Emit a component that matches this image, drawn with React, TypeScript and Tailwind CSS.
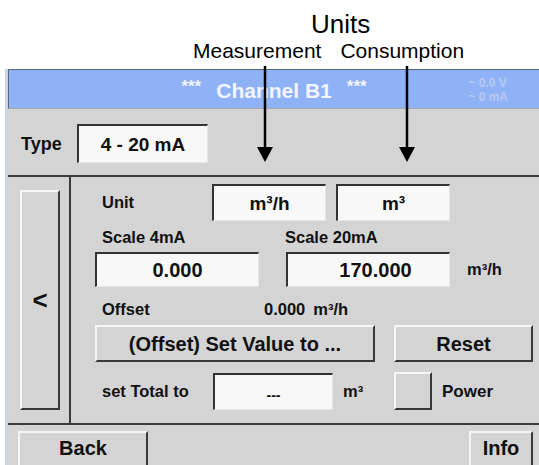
import React from "react";

const inputCls =
  "bg-[#f8f8f8] border-t-2 border-l-2 border-t-[#333] border-l-[#333] border-r border-b border-r-[#e6e6e6] border-b-[#e6e6e6] flex items-center justify-center font-bold text-[#111]";
const btnCls =
  "bg-[#d4d4d4] border-t-2 border-l-2 border-t-[#f6f6f6] border-l-[#f6f6f6] border-r-2 border-b-2 border-r-[#383838] border-b-[#383838] flex items-center justify-center font-bold text-[#111]";
const labelCls = "font-bold text-[16.5px] text-[#111]";

export default function App() {
  return (
    <div className="relative w-[539px] h-[465px] overflow-hidden bg-white font-['Liberation_Sans',Arial,sans-serif] leading-none">
      {/* Top annotation */}
      <div className="h-[69px] flex flex-col">
        <div className="pt-[11px] pl-[311px] text-[26px] text-black h-[36px]">Units</div>
        <div className="flex mt-[4px] text-[21px] text-black">
          <span className="pl-[193px]">Measurement</span>
          <span className="ml-[19px]">Consumption</span>
        </div>
      </div>

      {/* Panel */}
      <div className="ml-[5px] border-l-[3px] border-l-[#c8d5ec] flex flex-col">
        {/* Header */}
        <div className="h-[40px] bg-[#8fb1f6] border-t border-l border-t-[#5d6677] border-l-[#5d6677] border-b border-b-[#a6a6a6] grid grid-cols-[1fr_auto_1fr] items-center">
          <div />
          <div className="flex items-center gap-[15px] text-[#f2f5fd] font-bold pt-[2px]">
            <span className="text-[17px] -mt-[8px]">***</span>
            <span className="text-[21px]">Channel B1</span>
            <span className="text-[17px] -mt-[8px]">***</span>
          </div>
          <div className="flex justify-end pr-[31px]">
            <div className="text-[12px] font-bold text-[#b8caf3] leading-[14px] pt-[1px]">
              <div>~ 0.0 V</div>
              <div>~ 0 mA</div>
            </div>
          </div>
        </div>

        {/* Type row */}
        <div className="h-[68px] bg-[#d4d4d4] border-b-2 border-b-[#3a3a3a] flex items-center pl-[13px] pt-[3px]">
          <span className="font-bold text-[18px] text-[#111] w-[56px]">Type</span>
          <div className={`${inputCls} w-[131px] h-[39px] text-[19px]`}>4 - 20 mA</div>
        </div>

        {/* Middle section */}
        <div className="h-[248px] bg-[#d4d4d4] border-b-2 border-b-[#3a3a3a] flex">
          <div className="w-[63px] border-r-2 border-r-[#3a3a3a] pl-[12px] pt-[13px]">
            <div className={`${btnCls} w-[40px] h-[220px] text-[26px]`}>&lt;</div>
          </div>
          <div className="flex-1 flex flex-col">
            {/* Row 1 */}
            <div className="mt-[7px] h-[37px] flex items-center">
              <div className={`${labelCls} w-[141px] pl-[31px]`}>Unit</div>
              <div className={`${inputCls} w-[114px] h-[37px] text-[19px]`}>m³/h</div>
              <div className={`${inputCls} w-[114px] h-[37px] text-[19px] ml-[10px]`}>m³</div>
            </div>
            {/* Row 2 */}
            <div className="h-[31px] flex items-center pt-[2px]">
              <div className={`${labelCls} w-[214px] pl-[31px]`}>Scale 4mA</div>
              <div className={labelCls}>Scale 20mA</div>
            </div>
            {/* Row 3 */}
            <div className="h-[35px] flex items-center">
              <div className={`${inputCls} w-[164px] h-[35px] text-[20px] ml-[24px]`}>0.000</div>
              <div className={`${inputCls} w-[164px] h-[35px] text-[20px] ml-[27px] pl-[14px]`}>170.000</div>
              <div className={`${labelCls} ml-[17px]`}>m³/h</div>
            </div>
            {/* Row 4 */}
            <div className="h-[38px] flex items-center pt-[6px]">
              <div className={`${labelCls} w-[193px] pl-[31px]`}>Offset</div>
              <div className={`${labelCls} flex gap-[8px]`}>
                <span>0.000</span>
                <span>m³/h</span>
              </div>
            </div>
            {/* Row 5 */}
            <div className="h-[37px] flex items-center">
              <div className={`${btnCls} w-[280px] h-[37px] text-[20px] ml-[24px]`}>(Offset) Set Value to ...</div>
              <div className={`${btnCls} w-[139px] h-[37px] text-[20px] ml-[19px]`}>Reset</div>
            </div>
            {/* Row 6 */}
            <div className="mt-[10px] h-[38px] flex items-center">
              <div className={`${labelCls} w-[142px] pl-[31px]`}>set Total to</div>
              <div className={`${inputCls} w-[120px] h-[37px] text-[14px] pt-[6px]`}>---</div>
              <div className={`${labelCls} w-[61px] pl-[10px]`}>m³</div>
              <div className={`${btnCls} w-[38px] h-[38px]`} />
              <div className="font-bold text-[17px] text-[#111] ml-[10px]">Power</div>
            </div>
          </div>
        </div>

        {/* Bottom row */}
        <div className="h-[45px] bg-[#d4d4d4] flex justify-between items-start pt-[6px] pl-[10px] pr-[6px]">
          <div className={`${btnCls} w-[130px] h-[42px] text-[20px] pb-[8px]`}>Back</div>
          <div className={`${btnCls} w-[64px] h-[42px] text-[20px] pb-[8px]`}>Info</div>
        </div>
      </div>

      {/* Arrows overlay */}
      <svg className="absolute left-0 top-0 pointer-events-none" width="539" height="200">
        <line x1="265" y1="66" x2="265" y2="150" stroke="#000" strokeWidth="2.5" />
        <polygon points="257,147 273,147 265,162" fill="#000" />
        <line x1="407" y1="66" x2="407" y2="150" stroke="#000" strokeWidth="2.5" />
        <polygon points="399,147 415,147 407,162" fill="#000" />
      </svg>
    </div>
  );
}
